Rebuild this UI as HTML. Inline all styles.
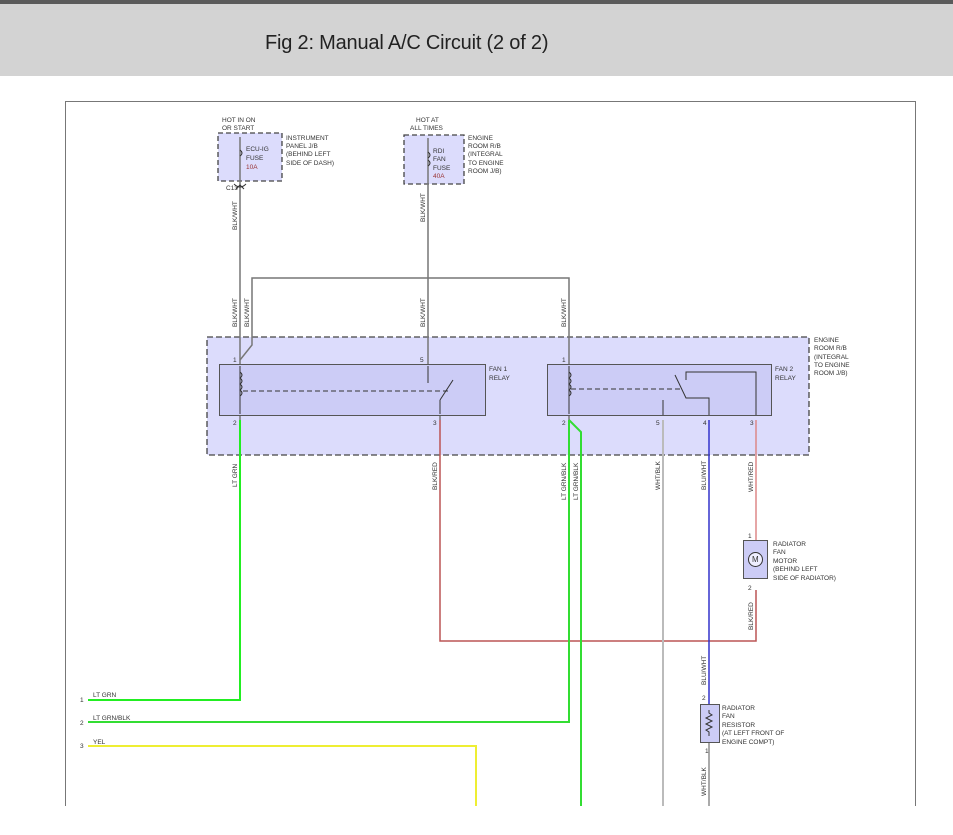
<!DOCTYPE html>
<html><head><meta charset="utf-8"><style>
body{margin:0;width:953px;height:835px;overflow:hidden;background:#fff;font-family:"Liberation Sans",sans-serif}
.top{position:absolute;left:0;top:0;width:953px;height:4px;background:#5a5a5a}
.hdr{position:absolute;left:0;top:4px;width:953px;height:72px;background:#d3d3d3}
.hdr span{position:absolute;left:265px;top:28px;font-size:20px;color:#222;letter-spacing:-0.2px}
svg{position:absolute;left:0;top:0}
text{font-family:"Liberation Sans",sans-serif;font-size:6.5px;fill:#333}
</style></head><body>
<div class="top"></div><div class="hdr"><span>Fig 2: Manual A/C Circuit (2 of 2)</span></div>
<svg width="953" height="835">
<rect x="65.5" y="101.5" width="850" height="760" fill="none" stroke="#777"/>
<rect x="0" y="806" width="953" height="29" fill="#fff"/>
<rect x="218" y="133" width="64" height="48" fill="#dcdcfc" stroke="#444" stroke-dasharray="5,3" stroke-width="1.3"/>
<rect x="404" y="135" width="60" height="49" fill="#dcdcfc" stroke="#444" stroke-dasharray="5,3" stroke-width="1.3"/>
<text x="222" y="122">HOT IN ON</text><text x="222" y="130">OR START</text>
<text x="286" y="140">INSTRUMENT</text><text x="286" y="148">PANEL J/B</text><text x="286" y="156">(BEHIND LEFT</text><text x="286" y="165">SIDE OF DASH)</text>
<text x="246" y="151">ECU-IG</text><text x="246" y="160">FUSE</text><text x="246" y="169" style="fill:#933">10A</text>
<text x="226" y="190">C13</text>
<text x="416" y="122">HOT AT</text><text x="410" y="130">ALL TIMES</text>
<text x="468" y="140">ENGINE</text><text x="468" y="148">ROOM R/B</text><text x="468" y="156">(INTEGRAL</text><text x="468" y="165">TO ENGINE</text><text x="468" y="173">ROOM J/B)</text>
<text x="433" y="153">RDI</text><text x="433" y="161">FAN</text><text x="433" y="170">FUSE</text><text x="433" y="178" style="fill:#933">40A</text>
<rect x="207" y="337" width="602" height="118" fill="#dcdcfc" stroke="#444" stroke-dasharray="6,3" stroke-width="1.3"/>
<text x="814" y="342">ENGINE</text><text x="814" y="350">ROOM R/B</text><text x="814" y="359">(INTEGRAL</text><text x="814" y="367">TO ENGINE</text><text x="814" y="375">ROOM J/B)</text>
<rect x="219.5" y="364.5" width="266" height="51" fill="#ccccf6" stroke="#555"/>
<rect x="547.5" y="364.5" width="224" height="51" fill="#ccccf6" stroke="#555"/>
<text x="489" y="371">FAN 1</text><text x="489" y="380">RELAY</text>
<text x="775" y="371">FAN 2</text><text x="775" y="380">RELAY</text>
<g stroke="#777" stroke-width="1.5" fill="none">
<path d="M240 137V364"/><path d="M428 138V364"/>
<path d="M240 360L252 345V278H569V364"/>
<path d="M240 416V420M440 416V420M569 416V420"/>
</g>
<g stroke="#333" stroke-width="1" fill="none">
<path d="M234 184q6 6 12 0M236 189l4-4 4 4"/>
<path d="M240 150q4 3 0 6M428 152q4 3 0 6M428 160q4 3 0 6"/>
<path d="M243 391H450M571 389H680" stroke-dasharray="5,3"/>
<path d="M240 372q4 3 0 6q4 3 0 6q4 3 0 6q4 3 0 6M569 372q4 3 0 6q4 3 0 6q4 3 0 6q4 3 0 6"/>
<path d="M440 400L453 380M428 366V383M675 375L686 398H709V415M686 380V372H756V415M663 400V415"/>
<path d="M240 366V414M440 400V414M569 366V414"/>
</g>
<g fill="#333" font-size="6"><text x="233" y="362">1</text><text x="420" y="362">5</text><text x="233" y="425">2</text><text x="433" y="425">3</text>
<text x="562" y="362">1</text><text x="562" y="425">2</text><text x="656" y="425">5</text><text x="703" y="425">4</text><text x="750" y="425">3</text></g>
<g fill="none" stroke-width="2">
<path d="M240 420V700H88" stroke="#22ee22"/>
<path d="M440 420V641H756V590" stroke="#b55" stroke-width="1.5"/>
<path d="M569 420V722H88" stroke="#33dd33"/>
<path d="M569 420L581 432V806" stroke="#33dd33"/>
<path d="M663 420V806" stroke="#bbb"/>
<path d="M709 420V704" stroke="#33c" stroke-width="1.5"/>
<path d="M756 420V540" stroke="#d88" stroke-width="1.5"/>
<path d="M709 742V806" stroke="#aaa"/>
<path d="M88 746H476V806" stroke="#eeee33"/>
</g>
<g fill="#333" font-size="6.5">
<text transform="translate(237,487) rotate(-90)">LT GRN</text>
<text transform="translate(437,490) rotate(-90)">BLK/RED</text>
<text transform="translate(566,500) rotate(-90)">LT GRN/BLK</text>
<text transform="translate(578,500) rotate(-90)">LT GRN/BLK</text>
<text transform="translate(660,490) rotate(-90)">WHT/BLK</text>
<text transform="translate(706,490) rotate(-90)">BLU/WHT</text>
<text transform="translate(753,492) rotate(-90)">WHT/RED</text>
<text transform="translate(237,230) rotate(-90)">BLK/WHT</text>
<text transform="translate(425,222) rotate(-90)">BLK/WHT</text>
<text transform="translate(237,327) rotate(-90)">BLK/WHT</text>
<text transform="translate(249,327) rotate(-90)">BLK/WHT</text>
<text transform="translate(425,327) rotate(-90)">BLK/WHT</text>
<text transform="translate(566,327) rotate(-90)">BLK/WHT</text>
<text transform="translate(753,630) rotate(-90)">BLK/RED</text>
<text transform="translate(706,685) rotate(-90)">BLU/WHT</text>
<text transform="translate(706,796) rotate(-90)">WHT/BLK</text>
<text x="80" y="702">1</text><text x="80" y="725">2</text><text x="80" y="748">3</text>
<text x="93" y="697">LT GRN</text><text x="93" y="720">LT GRN/BLK</text><text x="93" y="744">YEL</text>
<text x="748" y="538">1</text><text x="748" y="590">2</text><text x="702" y="700">2</text><text x="705" y="753">1</text>
</g>
<rect x="743.5" y="540.5" width="24" height="38" fill="#ccccf6" stroke="#555"/>
<circle cx="755.5" cy="559.5" r="7" fill="#eef" stroke="#333"/>
<text x="752" y="562" style="font-size:8px">M</text>
<text x="773" y="546">RADIATOR</text><text x="773" y="554">FAN</text><text x="773" y="563">MOTOR</text><text x="773" y="571">(BEHIND LEFT</text><text x="773" y="580">SIDE OF RADIATOR)</text>
<rect x="700.5" y="704.5" width="19" height="38" fill="#ccccf6" stroke="#555"/>
<path d="M709 710v3l3 2-6 3 6 3-6 3 6 3-6 3 3 2v4" fill="none" stroke="#333"/>
<text x="722" y="710">RADIATOR</text><text x="722" y="718">FAN</text><text x="722" y="727">RESISTOR</text><text x="722" y="735">(AT LEFT FRONT OF</text><text x="722" y="744">ENGINE COMPT)</text>
</svg>
</body></html>
